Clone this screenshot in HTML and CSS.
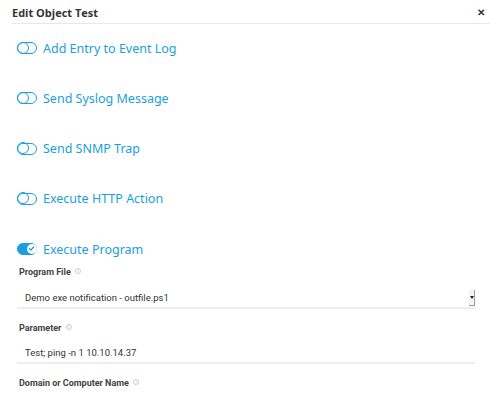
FILE: index.html
```html
<!DOCTYPE html>
<html lang="en">
<head>
    <meta charset="UTF-8">
    <title>Edit Object Test</title>
    <link rel="stylesheet" href="styles.css">
</head>
<body>
    <div class="dialog">
        <header class="dialog-header">
            <h1>Edit Object Test</h1>
            <span class="close">&#x2715;</span>
        </header>

        <div class="actions">
            <div class="toggle-row">
                <span class="toggle"></span>
                <span class="toggle-label">Add Entry to Event Log</span>
            </div>
            <div class="toggle-row">
                <span class="toggle"></span>
                <span class="toggle-label">Send Syslog Message</span>
            </div>
            <div class="toggle-row">
                <span class="toggle"></span>
                <span class="toggle-label">Send SNMP Trap</span>
            </div>
            <div class="toggle-row">
                <span class="toggle"></span>
                <span class="toggle-label">Execute HTTP Action</span>
            </div>
            <div class="toggle-row">
                <span class="toggle on">
                    <svg viewBox="0 0 10 10" width="9" height="9"><path d="M2.6 5.2 L4.3 6.8 L7.4 3.4" fill="none" stroke="#1a9fdb" stroke-width="1.5" stroke-linecap="round" stroke-linejoin="round"/></svg>
                </span>
                <span class="toggle-label">Execute Program</span>
            </div>
        </div>

        <div class="field">
            <label>Program File <span class="info">i</span></label>
            <div class="select">
                <span>Demo exe notification - outfile.ps1</span>
                <span class="select-btn"><span class="caret"></span></span>
            </div>
        </div>

        <div class="field">
            <label>Parameter <span class="info">i</span></label>
            <div class="input">Test; ping -n 1 10.10.14.37</div>
        </div>

        <div class="field">
            <label>Domain or Computer Name <span class="info">i</span></label>
        </div>
    </div>
</body>
</html>
```

FILE: styles.css
```css
:root {
    --blue: #1a9fdb;
    --text: #444;
    --line: #e8e8e8;
}

* {
    margin: 0;
    padding: 0;
    box-sizing: border-box;
}

body {
    font-family: "Open Sans", sans-serif;
    background-color: white;
    color: var(--text);
    width: 500px;
    height: 396px;
    overflow: hidden;
}

.dialog {
    padding: 0 10px 0 12px;
}

.dialog-header {
    display: flex;
    justify-content: space-between;
    align-items: center;
    height: 24px;
    border-bottom: 1px solid var(--line);
    padding-top: 1px;
}

.dialog-header h1 {
    font-size: 11px;
    font-weight: bold;
    color: #333;
}

.close {
    font-size: 10px;
    font-weight: bold;
    color: #333;
    margin-right: 5px;
}

.actions {
    padding: 15px 0 0 5px;
}

.toggle-row {
    display: flex;
    align-items: center;
    gap: 6px;
    height: 18px;
    margin-bottom: 32.3px;
}

.toggle-row:last-child {
    margin-bottom: 7px;
}

.toggle {
    position: relative;
    width: 20px;
    height: 12px;
    border: 1.5px solid var(--blue);
    border-radius: 6px;
}

.toggle::before {
    content: "";
    position: absolute;
    left: -1.5px;
    top: -1.5px;
    width: 12px;
    height: 12px;
    border: 1.5px solid var(--blue);
    border-radius: 50%;
    box-sizing: border-box;
}

.toggle.on {
    background-color: var(--blue);
}

.toggle.on::before {
    left: auto;
    right: -0.5px;
    top: -0.5px;
    width: 10px;
    height: 10px;
    border: none;
    background-color: white;
}

.toggle.on svg {
    position: absolute;
    right: 0;
    top: 0;
}

.toggle-label {
    font-family: "Noto Sans", sans-serif;
    font-size: 12.5px;
    color: var(--blue);
}

.field {
    padding-left: 7px;
    margin-right: 15px;
}

.field label {
    display: block;
    font-family: Roboto, sans-serif;
    font-size: 9px;
    font-weight: bold;
    color: var(--text);
    height: 14px;
    line-height: 14px;
}

.info {
    display: inline-flex;
    justify-content: center;
    align-items: center;
    width: 6px;
    height: 6px;
    border: 1px solid #ccc;
    border-radius: 50%;
    font-size: 4px;
    color: #ccc;
    vertical-align: 3px;
    margin-left: 2px;
}

.select,
.input {
    display: flex;
    justify-content: space-between;
    align-items: center;
    height: 22px;
    margin: 8px 0 12px -2px;
    padding-left: 8px;
    font-family: Roboto, sans-serif;
    font-size: 9.5px;
    color: #333;
    border-bottom: 2px solid #eee;
}

.input {
    height: 21px;
}

.select-btn {
    display: flex;
    justify-content: center;
    align-items: center;
    width: 6px;
    height: 16px;
    background-color: #f4f4f4;
    border-right: 1px solid #999;
    border-bottom: 1px solid #999;
    margin-top: 1px;
}

.caret {
    width: 0;
    height: 0;
    border-left: 2px solid transparent;
    border-right: 2px solid transparent;
    border-top: 3px solid #222;
}
```
